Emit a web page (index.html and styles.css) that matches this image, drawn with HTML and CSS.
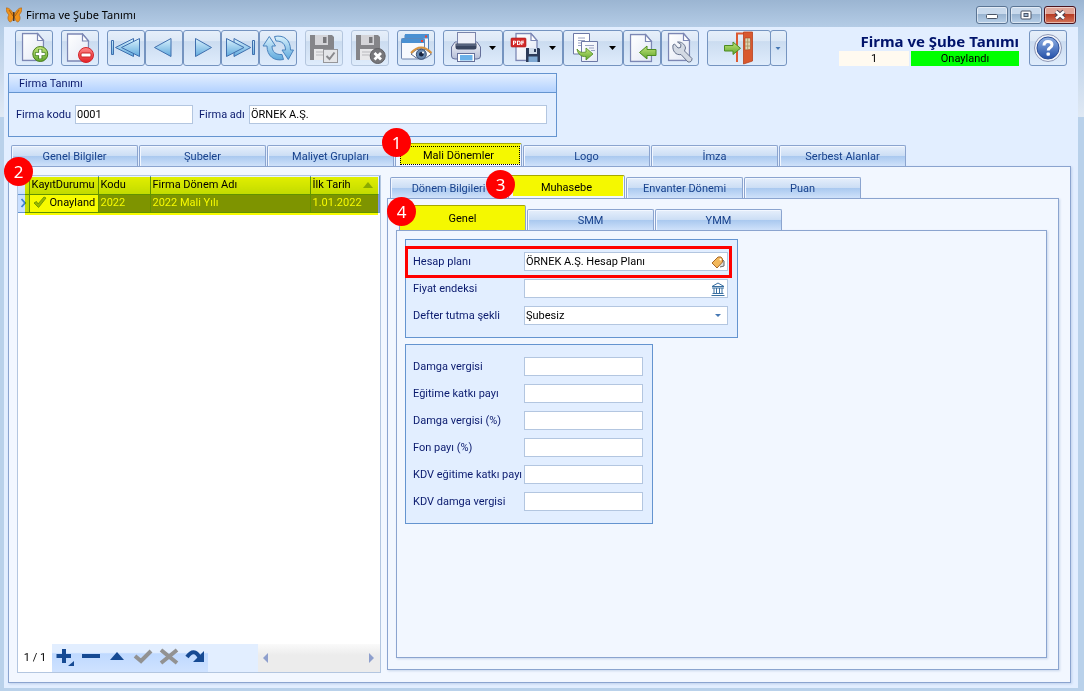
FILE: index.html
```html
<!DOCTYPE html>
<html lang="tr">
<head>
<meta charset="utf-8">
<title>Firma ve Şube Tanımı</title>
<link rel="stylesheet" href="styles.css">
</head>
<body>
<svg class="defs" width="0" height="0" aria-hidden="true">
  <defs>
    <linearGradient id="blue" x1="0" y1="0" x2="0" y2="1"><stop offset="0" stop-color="#d9f1fc"/><stop offset="1" stop-color="#5fa9dd"/></linearGradient>
    <linearGradient id="paper" x1="0" y1="0" x2="1" y2="1"><stop offset="0" stop-color="#fff"/><stop offset="1" stop-color="#e3e8f5"/></linearGradient>
    <linearGradient id="green" x1="0" y1="0" x2="0" y2="1"><stop offset="0" stop-color="#c3e67a"/><stop offset="1" stop-color="#5fa52c"/></linearGradient>
    <linearGradient id="red" x1="0" y1="0" x2="0" y2="1"><stop offset="0" stop-color="#ff8a8a"/><stop offset="1" stop-color="#e31e24"/></linearGradient>
    <linearGradient id="help" x1="0" y1="0" x2="0" y2="1"><stop offset="0" stop-color="#8fb0e4"/><stop offset="1" stop-color="#2450a8"/></linearGradient>
    <linearGradient id="metal" x1="0" y1="0" x2="0" y2="1"><stop offset="0" stop-color="#f5f6fb"/><stop offset="1" stop-color="#b4bdd6"/></linearGradient>
    <symbol id="page" viewBox="0 0 23 29"><path d="M1 1H16L22 8V28H1Z" fill="url(#paper)" stroke="#7c87b4" stroke-width="1.3"/><path d="M16 1V8H22Z" fill="#fff" stroke="#7c87b4" stroke-width="1.2"/></symbol>
    <symbol id="floppy" viewBox="0 0 24 25"><path d="M0 0H22L24 2V25H0Z" fill="#858589"/><path d="M5 0H18V10H5Z" fill="#d4d4d8"/><path d="M13 2H16.500V8H13Z" fill="#77777b"/><path d="M4 14H20V25H4Z" fill="#e8e8ea"/><path d="M6 17H18M6 20H18" stroke="#b9b9bd"/></symbol>
  </defs>
</svg>
<div class="window">
  <header class="titlebar">
    <svg class="logo" width="16" height="16" viewBox="0 0 16 16"><path d="M7.500 7C5 2 2 .5 0 1c0 3 1 5 3 7-2 2-1 6 1 7 2 0 3-3 4-6 1 3 2 6 4 6 2-1 3-5 1-7 2-2 3-4 3-7-2-.5-5 1-7.500 6Z" fill="#f0921a" stroke="#a85f16" stroke-width=".6"/><path d="M7.800 5V14" stroke="#4a2c12" stroke-width="1.400"/><path d="M3 3 7 9M13 3 9 9" stroke="#8a4d14" stroke-width=".7"/></svg>
    <h1 class="caption">Firma ve Şube Tanımı</h1>
    <div class="winbtns">
      <button class="winbtn" aria-label="Küçült"><svg width="30" height="16" viewBox="0 0 30 16"><rect x="9.500" y="7.500" width="11" height="4" rx="1" fill="#fff" stroke="#4a5566"/></svg></button>
      <button class="winbtn" aria-label="Ekranı kapla"><svg width="30" height="16" viewBox="0 0 30 16"><rect x="10" y="4" width="10" height="8" rx="1" fill="#fff" stroke="#4a5566"/><rect x="13" y="6.500" width="4" height="3" fill="#9db5d0" stroke="#4a5566"/></svg></button>
      <button class="winbtn close" aria-label="Kapat"><svg width="30" height="16" viewBox="0 0 30 16"><path d="M11 4.500 19 11.500M19 4.500 11 11.500" stroke="#4c4250" stroke-width="4.600"/><path d="M11 4.500 19 11.500M19 4.500 11 11.500" stroke="#fff" stroke-width="2.600"/></svg></button>
    </div>
  </header>
  <main class="client">
    <div class="toolbar">
      <div class="group"><button class="tool" aria-label="Yeni"><svg width="36" height="34" viewBox="1 1 36 34"><use href="#page" x="6.500" y="2.500" width="23" height="29"/><circle cx="25.300" cy="24" r="7.500" fill="url(#green)" stroke="#4a7d1d"/><path d="M25.300 19V29M20.300 24H30.300" stroke="#3f7a1c" stroke-width="4"/><path d="M25.300 19.500V28.500M20.800 24H29.800" stroke="#fff" stroke-width="2.400"/></svg></button></div>
      <div class="group"><button class="tool" aria-label="Sil"><svg width="36" height="34" viewBox="1 1 36 34"><use href="#page" x="5.500" y="3" width="23" height="29"/><circle cx="25" cy="25" r="7.500" fill="url(#red)" stroke="#d4252b"/><rect x="20" y="23" width="10" height="4" rx="1" fill="#fff" stroke="#c22"/></svg></button></div>
      <div class="group">
        <button class="tool" aria-label="İlk"><svg width="36" height="34" viewBox="1 1 36 34" fill="url(#blue)" stroke="#3f6fae"><path d="M4.500 10.500H6.500V24.500H4.500ZM8.500 17.500 26.500 8.500V26.500Z"/><path d="M14.500 17.500 32.500 8.500V26.500Z"/></svg></button>
        <button class="tool" aria-label="Önceki"><svg width="36" height="34" viewBox="1 1 36 34" fill="url(#blue)" stroke="#3f6fae"><path d="M9.500 17.500 26 8.500V26.500Z"/></svg></button>
        <button class="tool" aria-label="Sonraki"><svg width="36" height="34" viewBox="1 1 36 34" fill="url(#blue)" stroke="#3f6fae"><path d="M28.500 17.500 12.500 8.500V26.500Z"/></svg></button>
        <button class="tool" aria-label="Son"><svg width="36" height="34" viewBox="1 1 36 34" fill="url(#blue)" stroke="#3f6fae"><path d="M31.500 10.500H33.500V24.500H31.500ZM29.700 17.500 13 8.500V26.500Z"/><path d="M23 17.500 5.500 8.500V26.500Z"/></svg></button>
        <button class="tool" aria-label="Yenile"><svg width="36" height="34" viewBox="1 1 36 34" fill="url(#blue)" stroke="#4a83bd"><path d="M10.300 6.500 16.500 16H13C13 22 17 25 23 24.500L24.500 29.500C15 31.500 8 26 8 16H4Z"/><path d="M29.300 29.500 23 20H26.500C26.500 14 23 11 17 11L15.500 6.500C25 4.500 31.500 10 31.500 20H34.500Z"/></svg></button>
      </div>
      <div class="group"><button class="tool off" disabled aria-label="Kaydet"><svg width="36" height="34" viewBox="1 1 36 34"><use href="#floppy" x="5" y="5" width="24" height="25"/><rect x="18.500" y="19.500" width="14" height="13" fill="#e4e5e8" stroke="#96969a"/><path d="M21.500 26 24.500 29 29.500 22.500" fill="none" stroke="#88888c" stroke-width="2"/></svg></button></div>
      <div class="group"><button class="tool off" disabled aria-label="İptal"><svg width="36" height="34" viewBox="1 1 36 34"><use href="#floppy" x="5" y="5" width="24" height="25"/><circle cx="26.700" cy="26" r="7.500" fill="#77777b" stroke="#606064"/><path d="M23.500 23 30 29.500M30 23 23.500 29.500" stroke="#fff" stroke-width="2.800"/></svg></button></div>
      <div class="group"><button class="tool" aria-label="Görünüm"><svg width="36" height="34" viewBox="1 1 36 34"><rect x="8" y="4.500" width="23.500" height="20" rx="1" fill="#f2f5fb" stroke="#4f7fb8"/><path d="M8 4H32V8.500H8Z" fill="#4a90d2"/><path d="M28 5.500H30V7.500H28Z" fill="#e43"/><rect x="4.500" y="8.500" width="23" height="20.500" rx="1" fill="#f7f9fd" stroke="#6d83ac"/><path d="M4.500 8.500H27.500V13H4.500Z" fill="#4a90d2"/><path d="M24 10H26V12H24Z" fill="#e43"/><path d="M14 24Q24 13 34.500 24Q24 34 14 24Z" fill="#fff" stroke="#54678e"/><path d="M14 23Q24 12 34.500 23" fill="none" stroke="#d8943f" stroke-width="2"/><circle cx="24.300" cy="24.300" r="5" fill="#6787ae" stroke="#3b5379"/><circle cx="24.300" cy="24.300" r="2.300" fill="#16223d"/><circle cx="26" cy="22.500" r="1" fill="#fff"/></svg></button></div>
      <div class="group">
        <button class="tool wide" aria-label="Yazdır"><svg width="58" height="34" viewBox="1 1 58 34"><path d="M12 12H34L37.500 17V26Q37.500 29 34 29H12Q8.500 29 8.500 26V17Z" fill="url(#metal)" stroke="#65709a"/><rect x="14.500" y="2.500" width="18" height="13" fill="#eef0f8" stroke="#7a84ab"/><path d="M12.500 13.500H33.500V17Q33.500 19.500 31 19.500H15Q12.500 19.500 12.500 17Z" fill="#39455f"/><path d="M13 15H33" stroke="#77829c"/><rect x="14.500" y="23.500" width="17" height="8" fill="#fff" stroke="#65709a"/><path d="M17 25H29.500V30.500H17Z" fill="#6bb1e8"/><path d="M46 16H53L49.500 20Z" fill="#000"/></svg></button>
        <button class="tool wide" aria-label="PDF"><svg width="58" height="34" viewBox="1 1 58 34"><use href="#page" x="12" y="2.500" width="23" height="29"/><rect x="8" y="8" width="15" height="9" rx="1" fill="#d32a2a" stroke="#a81818" stroke-width=".6"/><text class="pdf" x="15.500" y="15" text-anchor="middle">PDF</text><path d="M23 18H36L37 19V32H23Z" fill="#2c3a58"/><path d="M26 18H34V24H26Z" fill="#cfdae9"/><path d="M31 19H33V22H31Z" fill="#2c3a58"/><path d="M25.500 26.500H34.500V32H25.500Z" fill="#7fa8d2"/><path d="M46 16H53L49.500 20Z" fill="#000"/></svg></button>
        <button class="tool wide" aria-label="Kopyala"><svg width="58" height="34" viewBox="1 1 58 34"><path d="M10.500 3.500H26.500V24H10.500Z" fill="#fff" stroke="#6d79a6"/><path d="M15 8H22M15 10.500H22M15 13H22M15 15.500H19" stroke="#9aa3c2"/><path d="M18.500 11.500H34.500V31.500H18.500Z" fill="url(#paper)" stroke="#6d79a6"/><path d="M22 15.500H31M26 18H31M28 20.500H32" stroke="#9aa3c2"/><path d="M14 19C17 23 20 22.500 23 22V18L30 24 23 30V26.500C19 27 15 25 14 19Z" fill="url(#green)" stroke="#4c8b20" stroke-width=".8"/><path d="M46 16H53L49.500 20Z" fill="#000"/></svg></button>
        <button class="tool" aria-label="İçe aktar"><svg width="36" height="34" viewBox="1 1 36 34"><use href="#page" x="6.500" y="3.500" width="23" height="29"/><path d="M16.500 22.500 24 16V19.500H33V25.500H24V29Z" fill="url(#green)" stroke="#4c8b20"/></svg></button>
        <button class="tool" aria-label="Ayarlar"><svg width="36" height="34" viewBox="1 1 36 34"><use href="#page" x="6.500" y="2.500" width="23" height="29"/><path d="M13.500 14 17 18 19.500 17.500 20 14.500 16.500 12C20 11.500 24 14 24.500 18L23.500 21 31 28.500Q31 32.500 27 32L20 24.500C15 25.500 11 21 12 15Z" fill="#d3d9e3" stroke="#66728c"/></svg></button>
      </div>
      <div class="group">
        <button class="tool exit" aria-label="Çıkış"><svg width="62" height="34" viewBox="1 1 62 34"><path d="M30 32V3.500H37" fill="none" stroke="#dc5a32" stroke-width="2"/><path d="M36.500 2H45.500V31L36.500 34Z" fill="#d9582e" stroke="#b9411c" stroke-width=".8"/><path d="M38 8H43.500V19.500L38 20Z" fill="#ddd6b5" stroke="#a8421f" stroke-width=".6"/><path d="M40.700 8V20M38 12H43.500M38 16H43.500" stroke="#a8905c" stroke-width=".8"/><path d="M17.500 15.500H26V12L33.500 18.300 26 24.500V21H17.500Z" fill="url(#green)" stroke="#4c8b20"/></svg></button>
        <button class="tool split" aria-label="Çıkış seçenekleri"><svg width="14" height="34" viewBox="0 0 14 34"><path d="M4.500 16H9.500L7 19Z" fill="#4678b4"/></svg></button>
      </div>
      <div class="status">
        <h2 class="heading">Firma ve Şube Tanımı</h2>
        <div class="flags"><span class="num">1</span><span class="ok">Onaylandı</span></div>
      </div>
      <button class="tool" aria-label="Yardım"><svg width="36" height="34" viewBox="1 1 36 34"><circle cx="19" cy="18" r="13.500" fill="#f2f4fa" stroke="#8d97b5"/><circle cx="19" cy="18" r="11" fill="url(#help)" stroke="#2d4f97"/><path d="M15 15.500Q15 11.500 19 11.500 23 11.500 23 14.800 23 16.500 21 17.800 19.200 19 19.200 20.500" fill="none" stroke="#fff" stroke-width="3"/><rect x="17.500" y="22.500" width="3.400" height="3.200" rx="1" fill="#fff"/></svg></button>
    </div>

    <section class="box firm">
      <h3 class="boxhead">Firma Tanımı</h3>
      <div class="firmrow">
        <label class="l1" for="kod">Firma kodu</label><input id="kod" class="field code" value="0001">
        <label class="l2" for="ad">Firma adı</label><input id="ad" class="field grow" value="ÖRNEK A.Ş.">
      </div>
    </section>

    <div class="tabs outer" role="tablist">
      <button class="tab" role="tab">Genel Bilgiler</button>
      <button class="tab" role="tab">Şubeler</button>
      <button class="tab" role="tab">Maliyet Grupları</button>
      <button class="tab on focus" role="tab" aria-selected="true">Mali Dönemler<span class="badge b1">1</span></button>
      <button class="tab" role="tab">Logo</button>
      <button class="tab" role="tab">İmza</button>
      <button class="tab" role="tab">Serbest Alanlar</button>
    </div>
    <div class="pane main">
      <div class="list">
        <div class="gridwrap">
          <table class="grid">
            <colgroup><col class="c0"><col class="c1"><col class="c2"><col class="c3"><col class="c4"></colgroup>
            <thead><tr><th></th><th>KayıtDurumu</th><th>Kodu</th><th>Firma Dönem Adı</th><th><span class="sorted">İlk Tarih<svg width="10" height="6" viewBox="0 0 10 6"><path d="M0 6 5 0 10 6Z" fill="#8faed0"/></svg></span></th></tr></thead>
            <tbody><tr><td class="mark"><svg width="7" height="10" viewBox="0 0 7 10"><path d="M1.500 1 5 5 1.500 9" fill="none" stroke="#3f80d0" stroke-width="1.800"/></svg></td><td class="state"><svg width="14" height="12" viewBox="0 0 14 12"><path d="M1 7 3.500 5.500 5 8 11 1 13 2 5.500 11.500Z" fill="#9fbd7d" stroke="#7d9d64"/></svg>Onayland</td><td>2022</td><td>2022 Mali Yılı</td><td>1.01.2022</td></tr></tbody>
          </table>
          <div class="marker"></div>
          <span class="badge b2">2</span>
        </div>
        <div class="navbar">
          <span class="pos">1 / 1</span>
          <div class="navbtns">
            <button class="nav" aria-label="Ekle"><svg width="20" height="20" viewBox="0 0 20 20"><path d="M9 2V16M1.500 9H16" stroke="#164a93" stroke-width="4"/><path d="M19 14V19H13Z" fill="#164a93"/></svg></button>
            <button class="nav" aria-label="Çıkar"><svg width="20" height="20" viewBox="0 0 20 20"><path d="M1 9H19" stroke="#164a93" stroke-width="4"/></svg></button>
            <button class="nav" aria-label="Düzenle"><svg width="20" height="20" viewBox="0 0 20 20"><path d="M3 13 10 5 17 13Z" fill="#164a93"/></svg></button>
            <button class="nav" aria-label="Onayla"><svg width="20" height="20" viewBox="0 0 20 20"><path d="M2 9 8 14 18 4" fill="none" stroke="#929292" stroke-width="4"/></svg></button>
            <button class="nav" aria-label="Vazgeç"><svg width="20" height="20" viewBox="0 0 20 20"><path d="M2 3 18 16M18 3 2 16" stroke="#929292" stroke-width="4"/></svg></button>
            <button class="nav" aria-label="Geri al"><svg width="20" height="20" viewBox="0 0 20 20"><path d="M2 10Q9 0 15 11" fill="none" stroke="#164a93" stroke-width="4"/><path d="M19 4V15H8Z" fill="#164a93"/></svg></button>
          </div>
          <div class="hscroll"><svg width="6" height="10" viewBox="0 0 6 10"><path d="M5 0V10L0 5Z" fill="#8e9fcd"/></svg><svg width="6" height="10" viewBox="0 0 6 10"><path d="M0 0V10L5 5Z" fill="#8e9fcd"/></svg></div>
        </div>
      </div>

      <div class="detail">
        <div class="tabs mid" role="tablist">
          <button class="tab" role="tab">Dönem Bilgileri</button>
          <button class="tab on" role="tab" aria-selected="true">Muhasebe<span class="badge b3">3</span></button>
          <button class="tab" role="tab">Envanter Dönemi</button>
          <button class="tab" role="tab">Puan</button>
        </div>
        <div class="pane second">
          <div class="tabs inner" role="tablist">
            <button class="tab on tall" role="tab" aria-selected="true">Genel<span class="badge b4">4</span></button>
            <button class="tab" role="tab">SMM</button>
            <button class="tab" role="tab">YMM</button>
          </div>
          <div class="pane third">
            <section class="box plan">
              <div class="row framed"><label for="hp">Hesap planı</label><div class="combo"><input id="hp" value="ÖRNEK A.Ş. Hesap Planı"><svg width="14" height="14" viewBox="0 0 14 14"><path d="M8 2 13 6V11L9 12" fill="#ddd" stroke="#666"/><path d="M1 8 7 2H10L11.500 4V7L6 13Z" fill="#f3b85b" stroke="#a8682a"/><circle cx="9.500" cy="4.500" r="1" fill="#fff"/></svg></div></div>
              <div class="row"><label for="fe">Fiyat endeksi</label><div class="combo"><input id="fe"><svg width="14" height="14" viewBox="0 0 14 14" fill="none" stroke="#386ea0"><path d="M1 4.500 7 1 13 4.500ZM1 6H13M3 6V11M5.500 6V11M8.500 6V11M11 6V11M1.500 11.500H12.500M.5 13.500H13.500"/></svg></div></div>
              <div class="row pick"><label for="dt">Defter tutma şekli</label><select id="dt" class="field choice"><option>Şubesiz</option></select></div>
            </section>
            <section class="box taxes">
              <div class="row"><label for="t1">Damga vergisi</label><input id="t1" class="field"></div>
              <div class="row"><label for="t2">Eğitime katkı payı</label><input id="t2" class="field"></div>
              <div class="row"><label for="t3">Damga vergisi (%)</label><input id="t3" class="field"></div>
              <div class="row"><label for="t4">Fon payı (%)</label><input id="t4" class="field"></div>
              <div class="row"><label for="t5">KDV eğitime katkı payı</label><input id="t5" class="field"></div>
              <div class="row"><label for="t6">KDV damga vergisi</label><input id="t6" class="field"></div>
            </section>
          </div>
        </div>
      </div>
    </div>
  </main>
</div>
</body>
</html>
```
FILE: styles.css
```css
* { box-sizing: border-box; }
body { margin: 0; font-family: Roboto, "Noto Sans", sans-serif; font-size: 11px; line-height: 14px; color: #000; }
button, input, select { font: inherit; color: inherit; margin: 0; padding: 0; border: 0; }
h1, h2, h3 { margin: 0; font-weight: normal; }
svg { display: block; flex: none; }
label { white-space: nowrap; color: #0a1a6e; }
.defs { position: absolute; }

.window { min-height: 100vh; display: flex; flex-direction: column; padding: 0 6px 3px 4px; background: linear-gradient(#9bb5d2 0, #b4cce6 27px, #e0e9f4 117px, #b9d1ea 117px); }
.titlebar { height: 27px; display: flex; align-items: center; gap: 4px; padding: 3px 2px 0; }
.caption { flex: 1; font-family: "Noto Sans", sans-serif; font-size: 11px; line-height: 16px; }
.winbtns { display: flex; gap: 2px; }
.winbtn { width: 32px; height: 18px; border: 1px solid #5b7594; border-radius: 3px; background: linear-gradient(#c8d9ec 0 45%, #98b3d0 45%, #b7cfe8); box-shadow: inset 0 0 0 1px #ffffff80; }
.close { border-color: #4a1420; background: linear-gradient(#dfa396 0 45%, #b73a22 45%, #d4745a); }

.client { flex: 1; display: flex; flex-direction: column; background: #e2eeff; padding: 3px 7px 5px 4px; }
.toolbar { display: flex; gap: 8px; padding: 0 4px 0 7px; }
.group { display: flex; }
.tool { width: 38px; height: 36px; flex: none; border: 1px solid #7594c0; border-radius: 3px; background: linear-gradient(#e6effa 0, #dce8f6 30%, #cbdcf0 31%, #dfecfc); }
.off { border-color: #b4c6de; }
.wide { width: 60px; }
.exit { width: 64px; }
.split { width: 17px; margin-left: -1px; }
.pdf { font: bold 6px "DejaVu Sans Condensed", sans-serif; fill: #fff; }
.status { margin-left: auto; width: 180px; padding-top: 1px; margin-right: 2px; }
.heading { font-family: "Noto Sans", sans-serif; font-size: 15px; line-height: 20px; font-weight: bold; text-align: right; white-space: nowrap; color: #00136b; }
.flags { display: flex; gap: 2px; text-align: center; line-height: 15px; }
.num { width: 70px; background: #fffaf0; }
.ok { flex: 1; background: #0f0; }

.box { border: 1px solid #6494d0; background: #e2eeff; }
.firm { width: 549px; height: 64px; margin-top: 7px; }
.boxhead { height: 19px; padding: 1px 10px; font-size: 11px; line-height: 17px; color: #0a1a6e; background: linear-gradient(#e4efff, #b3d2ff); border-bottom: 1px solid #6494d0; }
.firmrow { display: flex; align-items: center; gap: 6px; padding: 12px 9px 0 7px; }
.field, .combo { width: 120px; height: 19px; background: #fff; border: 1px solid #b3c6e0; padding: 0 1px; }
.code { width: 118px; }
.l1 { width: 53px; }
.l2 { width: 44px; }
.firmrow .grow { flex: 1; }

.tabs { display: flex; align-items: flex-end; gap: 1px; }
.tab { position: relative; width: 127px; height: 21px; padding-top: 2px; border: 1px solid #8ba4cf; border-bottom: 0; border-radius: 2px 2px 0 0; color: #17418c; white-space: nowrap; background: linear-gradient(#e6effb 0, #ccdef5 48%, #a9c8ef 50%, #cfe1fa); box-shadow: inset 1px 1px 0 #f2f7ff; }
.on { height: 23px; color: #000; background: #f5f800; box-shadow: inset -1px -2px 0 #f2f7ff, inset 4px 0 0 #f2f7ff; border-top-color: #a6a800; z-index: 1; }
.focus::after { content: ""; position: absolute; inset: 2px 1px 1px 4px; border: 1px dotted #000; }
.outer { height: 29px; padding-left: 3px; }
.mid { height: 23px; padding-left: 3px; }
.mid .tab { width: 117px; }
.inner { height: 25px; padding-left: 3px; }
.tall { height: 25px; box-shadow: none; }
.pane { flex: 1; border: 1px solid #8ba4cf; background: #f2f7ff; box-shadow: 1px 1px 2px #8ba4cf66; }

.main { display: flex; gap: 6px; padding: 8px 11px 9px 8px; }
.list { flex: 0 0 364px; display: flex; flex-direction: column; background: #fff; border: 1px solid #b3c6e0; }
.gridwrap { flex: 1; position: relative; }
.grid { width: 100%; table-layout: fixed; border-collapse: collapse; }
.grid th, .grid td { height: 18px; padding: 0 2px; font-weight: normal; text-align: left; white-space: nowrap; overflow: hidden; border-right: 1px solid #6494d0; border-bottom: 1px solid #6494d0; }
.grid th { background: linear-gradient(#eaf3ff, #c9dfff); }
.grid td { background: #8296e0; color: #fff; }
.grid .mark { background: #c9dfff; }
.grid .state { background: #fff; color: #000; }
.state svg { display: inline-block; vertical-align: -2px; margin: 0 3px 0 1px; }
.sorted { display: flex; justify-content: space-between; align-items: center; padding-right: 4px; }
.c0 { width: 11px; } .c1 { width: 69px; } .c2 { width: 52px; } .c3 { width: 160px; }
.marker { position: absolute; left: 7px; top: 1px; right: 2px; height: 38px; background: #f7fb00; mix-blend-mode: multiply; }

.navbar { display: flex; height: 28px; background: #e2eeff; }
.pos { width: 34px; background: #fff; text-align: center; line-height: 28px; }
.navbtns { display: flex; gap: 6px; padding: 3px 0 0 3px; width: 156px; background: linear-gradient(#e2eeff 0 30%, #bfd9ff 35%, #cfe2ff); }
.nav { width: 20px; height: 20px; background: none; }
.hscroll { margin-left: auto; width: 122px; padding: 0 5px; display: flex; align-items: center; justify-content: space-between; background: linear-gradient(#fafafa, #ececec 40%); }

.detail { flex: 1; display: flex; flex-direction: column; padding-bottom: 3px; min-width: 0; }
.second { display: flex; flex-direction: column; padding: 6px 11px 11px 8px; }
.third { padding: 8px; }
.plan { width: 333px; height: 99px; padding: 8px 0; }
.taxes { width: 248px; height: 180px; margin-top: 6px; padding: 8px 0; }
.row { position: relative; height: 27px; display: flex; align-items: center; padding: 0 9px 0 7px; }
.row label { flex: 0 0 111px; }
.row .field { flex: 1; min-width: 0; }
.framed::after { content: ""; position: absolute; left: -1px; right: 5px; top: -2px; bottom: -3px; border: 3px solid #f00; pointer-events: none; }
.combo { flex: 1; display: flex; align-items: center; padding-right: 2px; }
.combo input { flex: 1; min-width: 0; height: 17px; background: none; }
.choice { appearance: none; }
.pick::after { content: ""; position: absolute; right: 16px; top: 12px; border: 3px solid transparent; border-top-color: #4678b4; border-bottom: 0; pointer-events: none; }

.badge { position: absolute; z-index: 2; width: 29px; height: 29px; border-radius: 50%; background: #f00; color: #fff; font-family: "Noto Sans", sans-serif; font-size: 17px; line-height: 29px; text-align: center; }
.b1 { left: -14px; top: -16px; }
.b2 { left: -14px; top: -19px; }
.b3 { left: -23px; top: -6px; }
.b4 { left: -13px; top: -9px; }
```
